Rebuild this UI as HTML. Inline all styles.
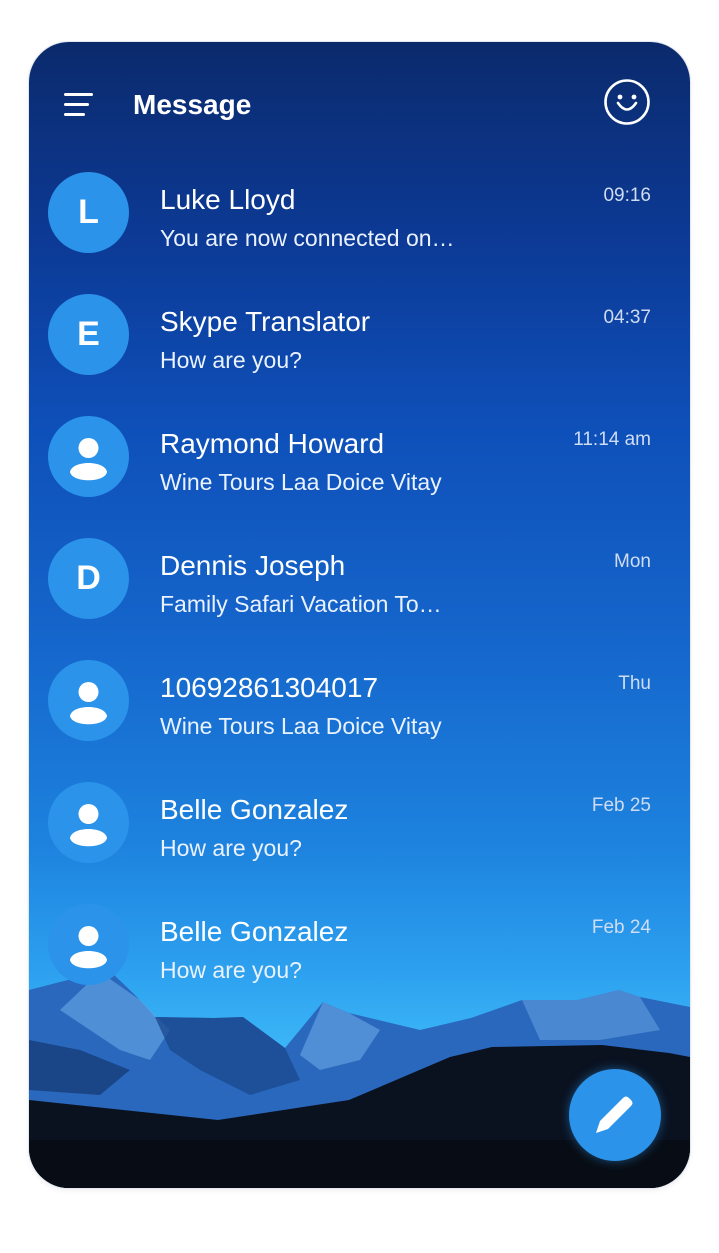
<!DOCTYPE html>
<html><head><meta charset="utf-8"><style>
*{margin:0;padding:0;box-sizing:border-box}
body{width:719px;height:1253px;background:#fff;position:relative;overflow:hidden;font-family:"Liberation Sans",sans-serif}
.card{position:absolute;left:29px;top:42px;width:661px;height:1146px;border-radius:40px;overflow:hidden;
background:linear-gradient(180deg,#0b2a6c 0px,#0c3a96 200px,#0e4fb8 380px,#1566cc 600px,#1d82de 800px,#2b9eee 920px,#3ab4f6 1000px,#3ab4f6 1146px);
box-shadow:0 0 0 1px #e4e8ee,0 2px 6px rgba(0,0,0,.08)}
.av{position:absolute;left:19px;width:81px;height:81px;border-radius:50%;background:#2b93ea;color:#fff;font-weight:bold;font-size:34px;text-align:center;line-height:81px}
.av svg{display:block}
.nm{position:absolute;left:131px;color:#fff;font-size:28px;white-space:nowrap}
.sb{position:absolute;left:131px;color:#eaf2ff;font-size:23px;white-space:nowrap}
.tm{position:absolute;right:39px;color:#cfdcf2;font-size:19px;white-space:nowrap}
</style></head><body>
<div class="card">
<svg style="position:absolute;left:0;top:0" width="661" height="1146" viewBox="29 42 661 1146">
<polygon fill="#2a68bd" points="29,990 60,982 100,972 112,973 135,995 155,1017 214,1018 243,1017 285,1048 323,1002 349,1013 420,1030 471,1018 522,1000 577,1000 619,990 640,997 690,1007 690,1188 29,1188"/>
<polygon fill="#5f9fe0" opacity=".7" points="100,972 140,1000 170,1030 150,1060 120,1050 90,1030 60,1010"/>
<polygon fill="#6aa8e6" opacity=".6" points="323,1002 349,1013 380,1030 360,1060 320,1070 300,1055"/>
<polygon fill="#6aa8e6" opacity=".5" points="522,1000 577,1000 619,990 640,997 660,1030 600,1040 540,1040"/>
<polygon fill="#1a4a90" opacity=".8" points="155,1017 214,1018 243,1017 285,1048 300,1080 250,1095 200,1070 170,1050"/>
<polygon fill="#163d7a" opacity=".8" points="29,1040 80,1050 130,1070 100,1095 29,1090"/>
<polygon fill="#0a1220" points="29,1100 218,1120 349,1100 450,1057 492,1047 602,1045 669,1053 690,1057 690,1188 29,1188"/>
<rect x="29" y="1140" width="661" height="48" fill="#080d15"/>
</svg>
<div style="position:absolute;left:35px;top:51px;width:29px;height:3px;background:#fff;border-radius:2px"></div>
<div style="position:absolute;left:35px;top:61px;width:25px;height:3px;background:#fff;border-radius:2px"></div>
<div style="position:absolute;left:35px;top:71px;width:21px;height:3px;background:#fff;border-radius:2px"></div>
<div style="position:absolute;left:104px;top:47px;color:#fff;font-weight:bold;font-size:28px">Message</div>
<svg style="position:absolute;left:574px;top:36px" width="48" height="48" viewBox="0 0 48 48"><circle cx="24" cy="24" r="21.5" fill="none" stroke="#fff" stroke-width="2.6"/><circle cx="17" cy="19" r="2.4" fill="#fff"/><circle cx="31" cy="19" r="2.4" fill="#fff"/><path d="M15 25 Q24 38 33 25" fill="none" stroke="#fff" stroke-width="2.6" stroke-linecap="round"/></svg>

<div class="av" style="top:130px">L</div>
<div class="nm" style="top:142px">Luke Lloyd</div>
<div class="sb" style="top:183px">You are now connected on…</div>
<div class="tm" style="top:143px">09:16</div>

<div class="av" style="top:252px">E</div>
<div class="nm" style="top:264px">Skype Translator</div>
<div class="sb" style="top:305px">How are you?</div>
<div class="tm" style="top:265px">04:37</div>

<div class="av" style="top:374px"><svg width="81" height="81" viewBox="0 0 81 81"><circle cx="40.5" cy="32" r="10" fill="#fff"/><path d="M22 56 C24 44 57 44 59 56 C57 67 24 67 22 56Z" fill="#fff"/></svg></div>
<div class="nm" style="top:386px">Raymond Howard</div>
<div class="sb" style="top:427px">Wine Tours Laa Doice Vitay</div>
<div class="tm" style="top:387px">11:14 am</div>

<div class="av" style="top:496px">D</div>
<div class="nm" style="top:508px">Dennis Joseph</div>
<div class="sb" style="top:549px">Family Safari Vacation To…</div>
<div class="tm" style="top:509px">Mon</div>

<div class="av" style="top:618px"><svg width="81" height="81" viewBox="0 0 81 81"><circle cx="40.5" cy="32" r="10" fill="#fff"/><path d="M22 56 C24 44 57 44 59 56 C57 67 24 67 22 56Z" fill="#fff"/></svg></div>
<div class="nm" style="top:630px">10692861304017</div>
<div class="sb" style="top:671px">Wine Tours Laa Doice Vitay</div>
<div class="tm" style="top:631px">Thu</div>

<div class="av" style="top:740px"><svg width="81" height="81" viewBox="0 0 81 81"><circle cx="40.5" cy="32" r="10" fill="#fff"/><path d="M22 56 C24 44 57 44 59 56 C57 67 24 67 22 56Z" fill="#fff"/></svg></div>
<div class="nm" style="top:752px">Belle Gonzalez</div>
<div class="sb" style="top:793px">How are you?</div>
<div class="tm" style="top:753px">Feb 25</div>

<div class="av" style="top:862px"><svg width="81" height="81" viewBox="0 0 81 81"><circle cx="40.5" cy="32" r="10" fill="#fff"/><path d="M22 56 C24 44 57 44 59 56 C57 67 24 67 22 56Z" fill="#fff"/></svg></div>
<div class="nm" style="top:874px">Belle Gonzalez</div>
<div class="sb" style="top:915px">How are you?</div>
<div class="tm" style="top:875px">Feb 24</div>

<div style="position:absolute;left:540px;top:1027px;width:92px;height:92px;border-radius:50%;background:#2b93ea;box-shadow:0 0 10px rgba(43,147,234,.5)">
<svg width="92" height="92" viewBox="0 0 92 92" style="display:block"><path d="M27 64 L31 52 L54 29 Q57 26 60 29 L62 31 Q65 34 62 37 L39 60 Z" fill="#fff"/></svg></div>
</div>
</body></html>
